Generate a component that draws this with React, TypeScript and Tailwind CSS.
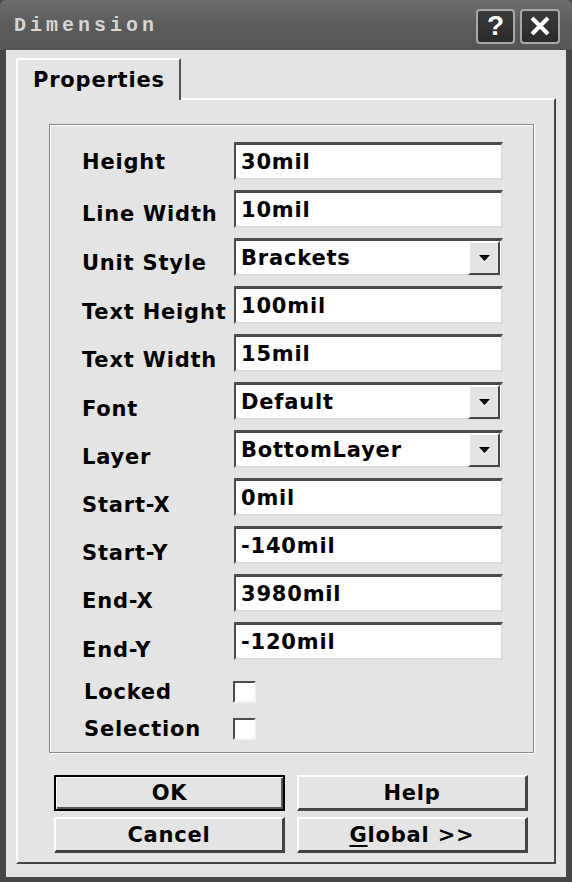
import React from "react";

type Row = { label: string; value: string; combo?: boolean; pt: number };

const rows: Row[] = [
  { label: "Height", value: "30mil", pt: 8 },
  { label: "Line Width", value: "10mil", pt: 12 },
  { label: "Unit Style", value: "Brackets", combo: true, pt: 13 },
  { label: "Text Height", value: "100mil", pt: 14 },
  { label: "Text Width", value: "15mil", pt: 14 },
  { label: "Font", value: "Default", combo: true, pt: 15 },
  { label: "Layer", value: "BottomLayer", combo: true, pt: 15 },
  { label: "Start-X", value: "0mil", pt: 15 },
  { label: "Start-Y", value: "-140mil", pt: 15 },
  { label: "End-X", value: "3980mil", pt: 15 },
  { label: "End-Y", value: "-120mil", pt: 16 },
];

const txt = "font-['DejaVu_Sans',sans-serif] font-bold text-[21px] leading-[24px] tracking-[0.8px] text-black";

function Field({ value, combo }: { value: string; combo?: boolean }) {
  return (
    <div className="h-[38px] w-[269px] bg-white border-t-[3px] border-l-2 border-b-2 border-r-2 border-t-[#4c4c4c] border-l-[#4c4c4c] border-b-[#dcdcdc] border-r-[#dcdcdc] flex items-center pl-[5px]">
      <span className={`${txt} flex-1 whitespace-nowrap`}>{value}</span>
      {combo && (
        <div className="h-[34px] w-[32px] mr-[1px] bg-[#e4e4e4] border-2 border-t-white border-l-white border-b-[#444] border-r-[#444] flex items-center justify-center">
          <svg width="11" height="6" viewBox="0 0 11 6">
            <path d="M0 0H11L5.5 6Z" fill="#000" />
          </svg>
        </div>
      )}
    </div>
  );
}

function Check() {
  return (
    <div className="h-[22px] w-[23px] bg-white border-2 border-t-[#4c4c4c] border-l-[#4c4c4c] border-b-[#f4f4f4] border-r-[#f4f4f4]" />
  );
}

function Btn({ children, def }: { children: React.ReactNode; def?: boolean }) {
  return (
    <div
      className={`w-[231px] h-[36px] flex items-center justify-center bg-[#e4e4e4] ${
        def
          ? "border-2 border-black shadow-[inset_1px_1px_0_white,inset_-2px_-2px_0_#555]"
          : "border-t-2 border-l-2 border-b-[3px] border-r-[3px] border-t-white border-l-white border-b-[#444] border-r-[#444]"
      }`}
    >
      <span className={txt}>{children}</span>
    </div>
  );
}

export default function App() {
  return (
    <div className="w-[572px] h-[882px] bg-[#474747] flex flex-col overflow-hidden">
      {/* title bar */}
      <div className="h-[50px] shrink-0 bg-gradient-to-b from-[#6e6e6e] via-[#5c5c5c] to-[#555] flex items-center pl-[14px] pr-[12px] rounded-t-[6px]">
        <span className="font-['Liberation_Mono',monospace] font-bold text-[20px] tracking-[4px] text-[#d6d6d6] flex-1 pt-[2px]">
          Dimension
        </span>
        <div className="flex gap-[5px] pt-[2px]">
          <div className="w-[39px] h-[35px] rounded-[4px] border-2 border-[#a8a8a8] bg-gradient-to-b from-[#3a3a3a] to-[#2a2a2a] flex items-center justify-center">
            <span className="font-['Liberation_Sans',sans-serif] font-bold text-[28px] leading-none text-white">?</span>
          </div>
          <div className="w-[40px] h-[35px] rounded-[4px] border-2 border-[#a8a8a8] bg-gradient-to-b from-[#3a3a3a] to-[#2a2a2a] flex items-center justify-center">
            <svg width="22" height="22" viewBox="0 0 22 22">
              <path d="M3 3L19 19M19 3L3 19" stroke="#fff" strokeWidth="4" />
            </svg>
          </div>
        </div>
      </div>

      {/* client area */}
      <div className="flex-1 mx-[6px] mb-[5px] bg-[#e4e4e4] pl-[10px] pr-[10px] pt-[8px] pb-[13px] flex flex-col">
        {/* tab */}
        <div className="relative z-10 -mb-[2px] w-[165px] h-[42px] bg-[#e4e4e4] border-t-2 border-l-2 border-r-2 border-t-white border-l-white border-r-[#555] rounded-tl-[2px] flex items-center pl-[15px]">
          <span className={txt}>Properties</span>
        </div>

        {/* tab panel */}
        <div className="flex-1 border-t-2 border-l-2 border-b-2 border-r-2 border-t-white border-l-white border-b-[#444] border-r-[#444] pt-[24px] pl-[31px] pr-[20px] flex flex-col">
          {/* group box */}
          <div className="border border-[#8a8a8a] shadow-[inset_1px_1px_0_white,1px_1px_0_white] pt-[17px] pl-[32px] pb-[11px] flex flex-col">
            {rows.map((r) => (
              <div key={r.label} className="h-[48px] flex items-start">
                <div className="w-[152px] whitespace-nowrap" style={{ paddingTop: r.pt }}>
                  <span className={txt}>{r.label}</span>
                </div>
                <Field value={r.value} combo={r.combo} />
              </div>
            ))}
            <div className="h-[10px]" />
            <div className="flex items-center h-[24px] pl-[2px]">
              <span className={`${txt} w-[149px]`}>Locked</span>
              <Check />
            </div>
            <div className="flex items-center h-[24px] mt-[13px] pl-[2px]">
              <span className={`${txt} w-[149px]`}>Selection</span>
              <Check />
            </div>
          </div>

          {/* buttons */}
          <div className="mt-[22px] pl-[5px] grid grid-cols-[231px_231px] gap-x-[12px] gap-y-[6px]">
            <Btn def>OK</Btn>
            <Btn>Help</Btn>
            <Btn>Cancel</Btn>
            <Btn>
              <span className="underline underline-offset-[3px]">G</span>lobal &gt;&gt;
            </Btn>
          </div>
        </div>
      </div>
    </div>
  );
}
